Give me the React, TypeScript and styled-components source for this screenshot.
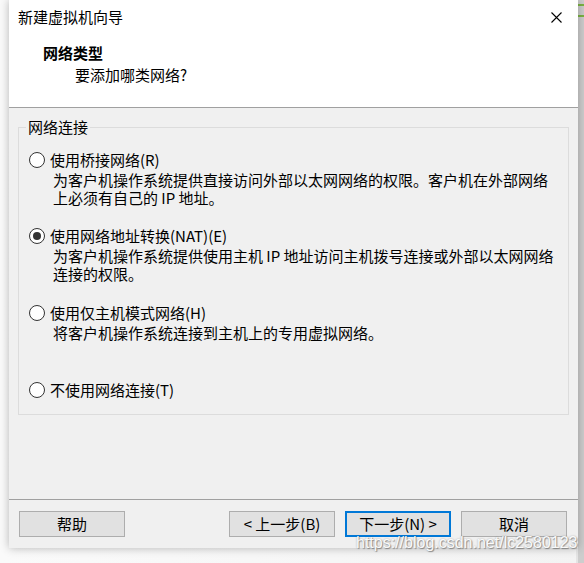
import { createGlobalStyle } from 'styled-components'
import styled from 'styled-components'

const GlobalStyle = createGlobalStyle`
  html, body {
    margin: 0;
    padding: 0;
    background: #ffffff;
  }
  body {
    font-family: "Noto Sans CJK SC", "Noto Sans", sans-serif;
    color: #000;
  }
`

const Desktop = styled.div`
  position: relative;
  width: 584px;
  height: 563px;
  overflow: hidden;
  background: linear-gradient(to right, #fafafa 0, #f3f3f3 100%);
`

const BackWindow = styled.div`
  position: absolute;
  top: 0;
  right: 0;
  width: 6px;
  height: 100%;
  background: #cdcdcd;
  border-left: 2px solid #e4e4e4;
`

const BackStripe = styled.div<{ $top: number }>`
  position: absolute;
  left: 0;
  right: 0;
  top: ${({ $top }) => $top}px;
  height: 2px;
  background: #7cb342;
`

const Window = styled.div`
  position: relative;
  margin-left: 9px;
  width: 569px;
  height: 548px;
  display: flex;
  flex-direction: column;
  background: #f0f0f0;
  box-shadow: 0 0 9px rgba(0, 0, 0, 0.28);
`

const Header = styled.div`
  background: #ffffff;
  border-bottom: 1px solid #a0a0a0;
  padding-bottom: 22px;
`

const TitleBar = styled.div`
  height: 34px;
  display: flex;
  align-items: center;
  justify-content: space-between;
  padding: 0 16px 0 9px;
  font-size: 15px;
  line-height: 20px;
`

const CloseIcon = () => (
  <svg width="11" height="11" viewBox="0 0 11 11">
    <path d="M0.5 0.5 L10.5 10.5 M10.5 0.5 L0.5 10.5" stroke="#000" strokeWidth="1.1" fill="none" />
  </svg>
)

const PageTitle = styled.div`
  margin: 9px 0 0 34px;
  font-size: 15px;
  line-height: 20px;
  font-weight: bold;
`

const PageSubtitle = styled.div`
  margin: 2px 0 0 66px;
  font-size: 15px;
  line-height: 20px;
`

const Body = styled.div`
  flex: 1;
  padding: 9px 9px 0;
`

const Group = styled.fieldset`
  margin: 0;
  padding: 0;
  border: 1px solid #dcdcdc;
  min-width: 0;
`

const GroupLegend = styled.legend`
  margin-left: 7px;
  padding: 0 2px;
  font-size: 15px;
  line-height: 20px;
`

const OptionList = styled.div`
  padding: 12px 0 13px 10px;
`

const Option = styled.div<{ $gap: number }>`
  margin-top: ${({ $gap }) => $gap}px;
`

const OptionRow = styled.label`
  height: 22px;
  display: flex;
  align-items: center;
  gap: 5px;
  font-size: 15px;
  line-height: 20px;
`

const Radio = styled.span<{ $checked: boolean }>`
  width: 16px;
  height: 16px;
  box-sizing: border-box;
  border-radius: 50%;
  border: 1px solid #333;
  background: #fff;
  display: flex;
  align-items: center;
  justify-content: center;
  &::after {
    content: '';
    display: ${({ $checked }) => ($checked ? 'block' : 'none')};
    width: 8px;
    height: 8px;
    border-radius: 50%;
    background: #333;
  }
`

const Description = styled.div`
  margin-left: 24px;
  font-size: 15px;
  line-height: 18px;
`

const Footer = styled.div`
  border-top: 1px solid #a0a0a0;
  padding: 11px 11px 11px 10px;
  display: flex;
  justify-content: space-between;
`

const ButtonGroup = styled.div`
  display: flex;
  gap: 10px;
`

const Button = styled.button<{ $default?: boolean }>`
  width: 106px;
  height: 26px;
  box-sizing: border-box;
  padding: 0;
  background: #e1e1e1;
  border: ${({ $default }) => ($default ? '2px solid #0078d7' : '1px solid #adadad')};
  font-family: "Noto Sans CJK SC", "Noto Sans", sans-serif;
  font-size: 15px;
  line-height: 20px;
  color: #000;
`

const Watermark = styled.div`
  position: absolute;
  left: 356px;
  top: 533px;
  font-family: "Liberation Sans", Arial, sans-serif;
  font-size: 16px;
  line-height: 20px;
  color: rgba(255, 255, 255, 0.95);
  text-shadow: 1px 1px 1px rgba(0, 0, 0, 0.35), 0 0 2px rgba(0, 0, 0, 0.3);
  pointer-events: none;
`

type NetworkOption = {
  label: string
  lines: string[]
  checked: boolean
  gap: number
}

const options: NetworkOption[] = [
  {
    label: '使用桥接网络(R)',
    lines: ['为客户机操作系统提供直接访问外部以太网网络的权限。客户机在外部网络', '上必须有自己的 IP 地址。'],
    checked: false,
    gap: 0,
  },
  {
    label: '使用网络地址转换(NAT)(E)',
    lines: ['为客户机操作系统提供使用主机 IP 地址访问主机拨号连接或外部以太网网络', '连接的权限。'],
    checked: true,
    gap: 18,
  },
  {
    label: '使用仅主机模式网络(H)',
    lines: ['将客户机操作系统连接到主机上的专用虚拟网络。'],
    checked: false,
    gap: 19,
  },
  {
    label: '不使用网络连接(T)',
    lines: [],
    checked: false,
    gap: 37,
  },
]

export default function App() {
  return (
    <>
      <GlobalStyle />
      <Desktop>
        <BackWindow>
          <BackStripe $top={4} />
          <BackStripe $top={15} />
        </BackWindow>
        <Window>
          <Header>
            <TitleBar>
              <span>新建虚拟机向导</span>
              <CloseIcon />
            </TitleBar>
            <PageTitle>网络类型</PageTitle>
            <PageSubtitle>要添加哪类网络?</PageSubtitle>
          </Header>
          <Body>
            <Group>
              <GroupLegend>网络连接</GroupLegend>
              <OptionList>
                {options.map(opt => (
                  <Option key={opt.label} $gap={opt.gap}>
                    <OptionRow>
                      <Radio $checked={opt.checked} />
                      {opt.label}
                    </OptionRow>
                    {opt.lines.length > 0 && (
                      <Description>
                        {opt.lines.map(line => (
                          <div key={line}>{line}</div>
                        ))}
                      </Description>
                    )}
                  </Option>
                ))}
              </OptionList>
            </Group>
          </Body>
          <Footer>
            <Button>帮助</Button>
            <ButtonGroup>
              <Button>&lt; 上一步(B)</Button>
              <Button $default>下一步(N) &gt;</Button>
              <Button>取消</Button>
            </ButtonGroup>
          </Footer>
        </Window>
        <Watermark>https://blog.csdn.net/lc2580123</Watermark>
      </Desktop>
    </>
  )
}
